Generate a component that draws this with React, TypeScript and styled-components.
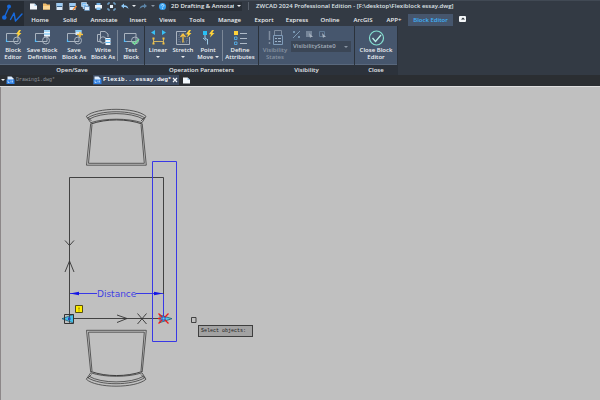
import React from 'react';
import styled, { createGlobalStyle } from 'styled-components';

const GlobalStyle = createGlobalStyle`
  * { box-sizing: border-box; }
  html, body { margin: 0; height: 100%; }
  #root { min-height: 100%; }
  body { background: #c0c0c0; font-family: 'Open Sans', 'Noto Sans', sans-serif; font-size: 6px; }
  button, select { font: inherit; color: inherit; border: 0; padding: 0; margin: 0; background: none; }
  svg { display: block; flex: none; }
`;

const Page = styled.div`
  display: flex;
  flex-direction: column;
  min-height: 100vh;
  overflow: hidden;
`;

const Header = styled.header`
  display: flex;
  background: #333a44;
  border-top: 1px solid #414954;
  height: 26px;
`;

const LogoButton = styled.button`
  width: 24px;
  height: 25px;
  background: #262c34;
`;

const HeaderRows = styled.div`
  flex: 1;
  min-width: 0;
  display: flex;
  flex-direction: column;
`;

const TitleBar = styled.div`
  display: flex;
  align-items: center;
  height: 10px;
  padding-left: 3px;
`;

const QuickButton = styled.button<{ $w?: number }>`
  display: flex;
  align-items: center;
  justify-content: center;
  width: ${(p) => p.$w ?? 13}px;
  height: 10px;
`;

const SelectWrap = styled.span<{ $w: number; $boxed?: boolean }>`
  display: flex;
  align-items: center;
  width: ${(p) => p.$w}px;
  height: ${(p) => (p.$boxed ? 11 : 9)}px;
  padding-right: ${(p) => (p.$boxed ? 3 : 1)}px;
  color: ${(p) => (p.$boxed ? '#a4aebb' : '#e8ebef')};
  background: ${(p) => (p.$boxed ? '#3b4656' : '#2a3038')};
`;

const Select = styled.select`
  appearance: none;
  flex: 1;
  min-width: 0;
  height: 9px;
  line-height: 9px;
  padding-left: 2px;
  margin-right: 3px;
  font-weight: 600;
  outline: none;
  overflow: hidden;
  &:disabled { opacity: 1; }
`;

const TitleText = styled.h1`
  margin: 0 0 0 6px;
  padding-left: 7px;
  border-left: 1px solid #59616c;
  font: 600 6px/8px 'Open Sans', sans-serif;
  color: #dfe3e8;
  white-space: nowrap;
`;

const TabRow = styled.nav`
  display: flex;
  align-items: flex-end;
  flex: 1;
`;

const RibbonTab = styled.button<{ $w: number; $active?: boolean }>`
  width: ${(p) => p.$w}px;
  height: 12px;
  line-height: 12px;
  font-weight: 600;
  white-space: nowrap;
  color: ${(p) => (p.$active ? '#3fb2fb' : '#eceff2')};
  background: ${(p) => (p.$active ? '#46566d' : 'transparent')};
`;

const Minimise = styled.button`
  display: flex;
  align-items: center;
  justify-content: center;
  align-self: center;
  width: 7px;
  height: 6px;
  margin-left: 6px;
  background: #f4f6f8;
  border-radius: 1px;
`;

const Ribbon = styled.div`
  display: flex;
  height: 49px;
  background: #333a44;
`;

const Group = styled.section<{ $w: number }>`
  display: flex;
  flex-direction: column;
  width: ${(p) => p.$w}px;
  border-right: 1px solid #2b323b;
`;

const Tools = styled.div`
  display: flex;
  height: 39px;
  background: #46566d;
  border-bottom: 1px solid #59687d;
`;

const GroupName = styled.h2`
  margin: 0;
  height: 10px;
  font: 600 6px/10px 'Open Sans', sans-serif;
  text-align: center;
  color: #e8ebee;
  background: #2c323b;
`;

const Tool = styled.button<{ $w: number }>`
  display: flex;
  flex-direction: column;
  align-items: center;
  width: ${(p) => p.$w}px;
  padding-top: 4px;
  font-weight: 600;
  line-height: 7px;
  white-space: nowrap;
  color: #eef1f4;
  &:disabled { color: #8793a2; }
`;

const ToolText = styled.span`
  display: flex;
  flex-direction: column;
  align-items: center;
  margin-top: 1px;
`;

const Divider = styled.i`
  width: 1px;
  height: 31px;
  margin: 4px 1px 0;
  background: #7b8797;
`;

const Caret = styled.i<{ $dim?: boolean }>`
  display: inline-block;
  vertical-align: middle;
  border: solid transparent;
  border-width: 2px 2px 0;
  border-top-color: ${(p) => (p.$dim ? '#8a95a3' : '#e8ebef')};
`;

const Stack = styled.div`
  display: flex;
  flex-direction: column;
  gap: 2px;
  padding-top: 3px;
`;

const SmallTools = styled.div`
  display: flex;
  gap: 3px;
`;

const DocBar = styled.nav`
  display: flex;
  height: 12px;
  padding-bottom: 1px;
  background: #2b2e32;
  border-bottom: 1px solid #dedede;
`;

const DocTab = styled.button<{ $active?: boolean; $w: number }>`
  display: flex;
  align-items: center;
  gap: 1px;
  width: ${(p) => p.$w}px;
  height: 10px;
  font: ${(p) => (p.$active ? 'bold 6px' : '5px')}/10px 'Liberation Mono', monospace;
  color: ${(p) => (p.$active ? '#f4f6fa' : '#8b9097')};
  background: ${(p) => (p.$active ? '#3c4a60' : 'transparent')};
  white-space: nowrap;
`;

const DocMenu = styled.button`
  width: 6px;
  height: 10px;
  line-height: 4px;
`;

const Canvas = styled.main`
  position: relative;
  flex: 1;
  min-height: 313px;
  background: #c0c0c0;
  box-shadow: inset 1px 0 #8c8788;
  overflow: hidden;
`;

const Prompt = styled.output`
  position: absolute;
  left: 198px;
  top: 238px;
  padding: 0 6px 0 2px;
  border: 1px solid #3e3e3e;
  background: #a2a2a2;
  color: #1c1c1c;
  font: 5px/10px 'Liberation Mono', monospace;
  white-space: nowrap;
`;

const GREY = '#a9b3bf';
const SKY = '#58b9f5';
const GOLD = '#f6c343';

const Logo = () => (
  <svg width="24" height="25" viewBox="0 0 24 25" fill="none" stroke="#1769dc" strokeWidth="1.4" strokeLinejoin="round" strokeLinecap="round">
    <path d="M9 6 4.500 16M10.500 18.500 14 12 15.500 20 22 13" />
    <circle cx="9" cy="5.500" r="2" fill="#1769dc" stroke="none" />
    <circle cx="4.300" cy="16.500" r="2.300" fill="#1769dc" stroke="none" />
  </svg>
);

type QuickKind = 'new' | 'open' | 'save' | 'saveas' | 'saveall' | 'print' | 'preview' | 'undo' | 'redo' | 'help';
const quickArt: Record<QuickKind, React.ReactNode> = {
  new: <><path d="M1 1.5h4.5L8 4v3.5H1z" fill="#f3f7fb" /><path d="M5.5 1.5 8 4H5.5z" fill="#9cc7ea" /></>,
  open: <><path d="M1 1.5h3l1 1h3v5H1z" fill="#f2bd6b" /><path d="M1 4h7v3.500H1z" fill="#fbd795" /></>,
  save: <><path d="M1.500 1h6v7h-6z" fill="#dcebfa" /><path d="M1.500 1h6v3h-6z" fill="#9ccbf4" /><path d="M2 4.500h5" stroke="#3b658d" /></>,
  saveas: <><path d="M1.500 1h6v7h-6z" fill="#dcebfa" /><path d="M1.500 1h6v3h-6z" fill="#9ccbf4" /><path d="M2 4.500h5" stroke="#3b658d" /><path d="M5 8 8.500 4" stroke="#f08a35" strokeWidth="1.500" /></>,
  saveall: <><path d="M.5.5h5v4h-5zM2 2.500h5v4H2z" fill="#75b8ef" stroke="#dcebfa" strokeWidth=".6" /><path d="M3.500 4.500h5v4h-5z" fill="#dcebfa" stroke="#4d83b5" strokeWidth=".6" /></>,
  print: <><path d="M2.500 1h4v2h-4z" fill="#74b5ea" /><path d="M1 3h7v3.500H1z" fill="#eff4f9" /><path d="M2.500 5.500h4V8h-4z" fill="#83c4f6" /></>,
  preview: <><path d="M1 3V1h2M6 1h2v2M8 6v2H6M3 8H1V6" stroke="#7db9e8" fill="none" /><path d="M3 3h3v3H3z" fill="#e4eef7" /></>,
  undo: <path d="M1 4 4 1.500v1.700c3 0 4 1.300 4.500 3.800C7 5.500 6 5 4 5v1.500z" fill="#8fc9f7" />,
  redo: <path d="M8 4 5 1.500v1.700C2 3.200 1 4.500.500 7 2 5.500 3 5 5 5v1.500z" fill="#5d86a9" />,
  help: <><circle cx="4.500" cy="4.500" r="3.500" fill="#37a2f3" /><path d="M3.300 3.600c0-1.700 2.600-1.500 2.500 0C5.700 4.300 4.500 4.400 4.500 5.400M4.500 6v.8" stroke="#e9f6ff" strokeWidth=".8" fill="none" /></>,
};

const QuickIcon = ({ kind }: { kind: QuickKind }) => (
  <svg width="9" height="9" viewBox="0 0 9 9">{quickArt[kind]}</svg>
);

type ToolKind = 'edit' | 'savedef' | 'saveblock' | 'write' | 'test' | 'linear' | 'stretch' | 'point' | 'attrs' | 'states' | 'close';

const BlockShape = () => (
  <g fill="none" stroke={GREY}>
    <path d="M1.500 3.500H13V11.500H1.500z" />
    <circle cx="12" cy="10.500" r="3.500" />
    <path d="M1.500 9.500v2h2" stroke={SKY} strokeWidth="1.200" />
  </g>
);

const Bolt = ({ x, y }: { x: number; y: number }) => (
  <path transform={`translate(${x} ${y})`} d="M3 0 0 4.200h2L1 7.500 5.500 3H3.300L5 0z" fill="#ffd23a" />
);

const toolArt: Record<ToolKind, React.ReactNode> = {
  edit: <><BlockShape /><Bolt x={11} y={0} /></>,
  savedef: <><BlockShape /><path d="M10 0h6v6.500h-6z" fill="#f0f5fb" /><path d="M10 1h6M10 4h6" stroke={SKY} strokeWidth="1.200" /></>,
  saveblock: <><BlockShape /><path d="M9.500 0h6v5h-6z" fill="#d8e8f7" /><path d="M9.500 1h6" stroke={SKY} strokeWidth="1.200" /><path d="M11 4.500h6M14 2v5" stroke={GOLD} strokeWidth="1.500" /></>,
  write: <><path d="M5.500 4.500h-3v7h4M5.500 9V1.500H10L13 4v3" fill="none" stroke={GREY} /><circle cx="8" cy="10" r="3.200" fill="none" stroke={GREY} /><path d="M10.500 8h5v7h-5z" fill="#f0f5fb" /><path d="M10.500 9.500h5M10.500 12.500h5" stroke={SKY} /></>,
  test: <><BlockShape /><path d="m9.500 11.500 2 2.500 4.500-5" fill="none" stroke="#75dd9a" strokeWidth="1.600" /></>,
  linear: <><path d="M5 0v5L1 2.500zM12 0v5l4-2.500z" fill="#38c0f5" /><path d="M3.500 8v6M13.500 8v6M3.500 11.500h10" fill="none" stroke="#d0b464" /><path d="M2.500 7.500h2v2h-2zM12.500 7.500h2v2h-2zM2.500 12.500h2v2h-2zM12.500 12.500h2v2h-2z" fill={GOLD} /></>,
  stretch: <><path d="M11 1.500H1.500v13h13V7" fill="none" stroke={GREY} /><path d="M4 4h8v8H4z" fill="none" stroke="#728096" strokeDasharray="1 1" /><path d="M8 12.500V4.500M5.500 7 8 4l2.500 3" fill="none" stroke={GOLD} strokeWidth="1.300" /><Bolt x={11} y={0} /></>,
  point: <><path d="M3 1h4v4H3z" fill="#28c0f6" /><path d="M5 5v3.500M3 8l3 2.500M5 8l3 2M7.500 9v5.500" fill="none" stroke="#9ecbe8" /><Bolt x={9} y={0} /></>,
  attrs: <><path d="M2 1h4v4H2z" fill="#ffd23a" /><path d="M8 3.500h7M8 8.500h7M8 13.500h7" stroke="#afbac8" /><path d="M2.500 7H5v2.500H2.500zM2.500 12H5v2.500H2.500z" fill="none" stroke={SKY} strokeWidth=".8" /></>,
  states: <><path d="M2.500 1v9M2.500 12v2" stroke="#7f8d9f" strokeWidth="1.500" /><path d="M7.500 5V.500h7V5" fill="none" stroke="#7f8d9f" /><path d="M6.500 5.500h9v9h-9z" fill="none" stroke="#7f9bb8" /><path d="M8 8.500h2M11 8.500h3M8 11.500h2M11 11.500h3" stroke="#9db4ca" /></>,
  close: <><circle cx="8.500" cy="8" r="7" fill="none" stroke="#84dfd0" strokeWidth="1.200" /><path d="m4.500 8 3 3.500L13 5" fill="none" stroke="#b9f3e9" strokeWidth="1.300" /></>,
};

const ToolIcon = ({ kind }: { kind: ToolKind }) => (
  <svg width="17" height="16" viewBox="0 0 17 16">{toolArt[kind]}</svg>
);

const ToolButton = ({ kind, w, lines, caret, disabled }: { kind: ToolKind; w: number; lines: string[]; caret?: 'below' | 'beside'; disabled?: boolean }) => (
  <Tool $w={w} disabled={disabled}>
    <ToolIcon kind={kind} />
    <ToolText>
      {lines.map((line, i) => (
        <span key={line}>{line}{caret === 'beside' && i === lines.length - 1 && <> <Caret /></>}</span>
      ))}
      {caret === 'below' && <span><Caret /></span>}
    </ToolText>
  </Tool>
);

const DwgIcon = () => (
  <svg width="9" height="9" viewBox="0 0 9 9">
    <path d="M1.500.500h4l2 2V5h-6z" fill="#dcecff" />
    <path d="M.5 3.500h8v4.500h-8z" fill="#2f80e4" />
    <path d="M2 4.500v2h1.500M5 4.500v2M6.500 4.500v2" fill="none" stroke="#d9ebff" strokeWidth=".7" />
  </svg>
);

const Chair = () => (
  <g fill="none" stroke="#3d3d3d" strokeWidth=".8">
    <path d="M86.300 116.300C96 107 136 107 146 116.300L142 122.700C128 118 105 118 90.700 122.700z" />
    <path d="M87.500 118C100 109.700 132 109.700 145 118M89 119.300C101 111.700 131 111.700 143.700 119.300" />
    <path d="M88 117.500 91.500 121M144.500 117.500 141 121" />
    <path d="M91 124C106 118.600 127 118.600 142 124" stroke="#222" />
    <path d="M90.700 123.500 86.500 165.200H146.300L142.200 123.500" />
    <path d="M92 124.500 88.500 163.300H144.300L141 124.500" />
  </g>
);

const Drawing = () => (
  <svg width="600" height="313" viewBox="0 87 600 313" role="img" aria-label="Table and chairs block">
    <Chair />
    <g transform="translate(0 495.500) scale(1 -1)"><Chair /></g>
    <g fill="none" stroke="#333" strokeWidth=".9">
      <path d="M69.500 318.500V177.500H163.500V294M62 318.500H164" />
      <path d="M65 240.500 69.500 245.500 74 240.500M65 272 69.500 261 74 272" />
      <path d="M117 315 127 318.500 117 322.500M137.500 313.500 146.500 324M146.500 313.500 137.500 324" />
      <path d="M191.500 317.500h4.500v5h-4.500z" />
    </g>
    <g fill="none" stroke="#3838e6">
      <path d="M152.500 161.500H176.500V341.500H152.500z" />
      <path d="M163.500 294V316M70 293.500H97M136 293.500H163" />
    </g>
    <path d="M70 293.500 79 291.800V295.200zM163 293.500 154 291.800V295.200z" fill="#1515e5" />
    <text x="97" y="297" fill="#4040e4" fontFamily="'DejaVu Sans', sans-serif" fontSize="9">Distance</text>
    <path d="M75.500 305.500h7v7h-7z" fill="#ffed00" stroke="#554d15" />
    <path d="M79 307.500v2M79 310.500v.800" stroke="#766500" />
    <path d="M62 318.700 73.500 314.500V323z" fill="#45bfe8" stroke="#246078" strokeWidth=".8" />
    <path d="M64.500 314.500h9v9h-9z" fill="none" stroke="#333" />
    <path d="M69.500 314V323" stroke="#333" strokeWidth=".7" />
    <path d="M68 317.500h2.500v2.500h-2.500z" fill="#2844b8" />
    <path d="M160 315 172 318.700 160 322.500z" fill="#5ac8e5" stroke="#235b70" strokeWidth=".8" />
    <path d="M158.500 313.500 168.500 323.500M168.500 313.500 158.500 323.500M158 318.500H161" stroke="#f01818" strokeWidth="1.300" />
    <path d="M162 317h3v3h-3z" fill="#63d5ec" stroke="#2933bb" strokeWidth=".8" />
  </svg>
);

const ribbonTabs: [string, number][] = [
  ['Home', 32], ['Solid', 28], ['Annotate', 40], ['Insert', 28], ['Views', 31], ['Tools', 28],
  ['Manage', 37], ['Export', 32], ['Express', 34], ['Online', 32], ['ArcGIS', 34], ['APP+', 28],
];

const quickButtons: [QuickKind, string][] = [
  ['new', 'New'], ['open', 'Open'], ['save', 'Save'], ['saveas', 'Save As'], ['saveall', 'Save All'],
  ['print', 'Print'], ['preview', 'Preview'], ['undo', 'Undo'],
];

export default function App() {
  return (
    <>
      <GlobalStyle />
      <Page>
        <Header>
          <LogoButton aria-label="Application menu"><Logo /></LogoButton>
          <HeaderRows>
            <TitleBar>
              {quickButtons.map(([kind, label]) => (
                <QuickButton key={kind} aria-label={label}><QuickIcon kind={kind} /></QuickButton>
              ))}
              <QuickButton $w={6} aria-label="Undo list"><Caret /></QuickButton>
              <QuickButton aria-label="Redo"><QuickIcon kind="redo" /></QuickButton>
              <QuickButton $w={6} aria-label="Redo list"><Caret $dim /></QuickButton>
              <QuickButton aria-label="Help"><QuickIcon kind="help" /></QuickButton>
              <SelectWrap $w={73}>
                <Select aria-label="Workspace"><option>2D Drafting &amp; Annotation</option></Select>
                <Caret />
              </SelectWrap>
              <TitleText>ZWCAD 2024 Professional Edition - [F:\desktop\Flexiblock essay.dwg]</TitleText>
            </TitleBar>
            <TabRow>
              {ribbonTabs.map(([name, w]) => <RibbonTab key={name} $w={w}>{name}</RibbonTab>)}
              <RibbonTab $w={45} $active>Block Editor</RibbonTab>
              <Minimise aria-label="Minimise ribbon">
                <svg width="4" height="3" viewBox="0 0 4 3"><path d="M0 2.500 2 .500l2 2z" fill="#222830" /></svg>
              </Minimise>
            </TabRow>
          </HeaderRows>
        </Header>

        <Ribbon>
          <Group $w={145}>
            <Tools>
              <ToolButton kind="edit" w={26} lines={['Block', 'Editor']} />
              <ToolButton kind="savedef" w={32} lines={['Save Block', 'Definition']} />
              <ToolButton kind="saveblock" w={32} lines={['Save', 'Block As']} />
              <ToolButton kind="write" w={26} lines={['Write', 'Block As']} />
              <Divider />
              <ToolButton kind="test" w={24} lines={['Test', 'Block']} />
            </Tools>
            <GroupName>Open/Save</GroupName>
          </Group>
          <Group $w={114}>
            <Tools>
              <ToolButton kind="linear" w={26} lines={['Linear']} caret="below" />
              <ToolButton kind="stretch" w={24} lines={['Stretch']} caret="below" />
              <ToolButton kind="point" w={26} lines={['Point', 'Move']} caret="beside" />
              <Divider />
              <ToolButton kind="attrs" w={32} lines={['Define', 'Attributes']} />
            </Tools>
            <GroupName>Operation Parameters</GroupName>
          </Group>
          <Group $w={96}>
            <Tools>
              <ToolButton kind="states" w={32} lines={['Visibility', 'States']} disabled />
              <Stack>
                <SmallTools>
                  <QuickButton $w={10} disabled aria-label="Visibility mode"><svg width="9" height="9" viewBox="0 0 9 9"><path d="M1 8 8 1" stroke="#7f9bb5" /><path d="M1 1h2v2H1zM6 6h2v2H6z" fill="#7795b0" /></svg></QuickButton>
                  <QuickButton $w={10} disabled aria-label="Make visible"><svg width="9" height="9" viewBox="0 0 9 9"><path d="M1 1h6v6H1z" fill="#76869a" /><path d="m4 3 4 4H6L5 8z" fill="#a7b2bf" /></svg></QuickButton>
                  <QuickButton $w={10} disabled aria-label="Make invisible"><svg width="9" height="9" viewBox="0 0 9 9"><path d="M1.500 1.500h5v5h-5z" fill="none" stroke="#617b96" /><path d="m4 3 4 4H6L5 8z" fill="#a7b2bf" /></svg></QuickButton>
                </SmallTools>
                <SelectWrap $w={60} $boxed>
                  <Select disabled aria-label="Visibility state"><option>VisibilityState0</option></Select>
                  <Caret $dim />
                </SelectWrap>
              </Stack>
            </Tools>
            <GroupName>Visibility</GroupName>
          </Group>
          <Group $w={43}>
            <Tools>
              <ToolButton kind="close" w={42} lines={['Close Block', 'Editor']} />
            </Tools>
            <GroupName>Close</GroupName>
          </Group>
        </Ribbon>

        <DocBar>
          <DocMenu aria-label="Document list"><Caret /></DocMenu>
          <DocTab $w={87}><DwgIcon />Drawing1.dwg*</DocTab>
          <DocTab $w={86} $active>
            <DwgIcon />Flexib...essay.dwg*
            <svg width="6" height="6" viewBox="0 0 6 6"><path d="m1 1 4 4M5 1 1 5" stroke="#f4f6fa" strokeWidth="1.200" /></svg>
          </DocTab>
          <QuickButton $w={15} aria-label="New document"><QuickIcon kind="new" /></QuickButton>
        </DocBar>

        <Canvas>
          <Drawing />
          <Prompt>Select objects:</Prompt>
        </Canvas>
      </Page>
    </>
  );
}
